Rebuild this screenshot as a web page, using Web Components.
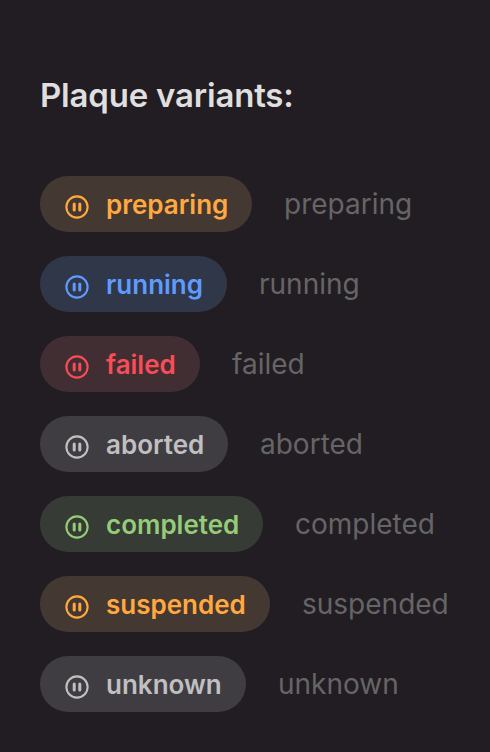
<!DOCTYPE html>
<html lang="en"><head><meta charset="utf-8"><title>Plaque variants</title>
<style>
body{margin:0;background:#221d22;font-family:Inter,"Liberation Sans",sans-serif}
</style></head><body>
<plaque-list heading="Plaque variants:">
<plaque-row variant="preparing" style="--fg:#ffa940;--bg:#443932;--w:212px"></plaque-row>
<plaque-row variant="running" style="--fg:#5e9bff;--bg:#2f3748;--w:187px"></plaque-row>
<plaque-row variant="failed" style="--fg:#f84d58;--bg:#412e33;--w:160px"></plaque-row>
<plaque-row variant="aborted" style="--fg:#c0c0c1;--bg:#3f3d42;--w:188px"></plaque-row>
<plaque-row variant="completed" style="--fg:#95cc78;--bg:#373b36;--w:223px"></plaque-row>
<plaque-row variant="suspended" style="--fg:#ffa940;--bg:#443932;--w:230px"></plaque-row>
<plaque-row variant="unknown" style="--fg:#c0c0c1;--bg:#3f3d42;--w:206px"></plaque-row>
</plaque-list>
<script>
class PlaqueList extends HTMLElement{
connectedCallback(){
this.attachShadow({mode:'open'}).innerHTML=`<style>
:host{display:block;box-sizing:border-box;height:752px;padding:75px 40px 0;overflow:hidden}
h1{margin:0 0 61px;font-size:33px;line-height:40px;font-weight:600;letter-spacing:-.2px;color:#dfdfdf;white-space:nowrap}
div{display:flex;flex-direction:column;gap:24px}
</style><h1>${this.getAttribute('heading')}</h1><div><slot></slot></div>`;
}}
class PauseIcon extends HTMLElement{
connectedCallback(){
this.attachShadow({mode:'open'}).innerHTML=`<style>:host{display:block;width:26px;height:26px}svg{display:block}</style>
<svg width="26" height="26" viewBox="0 0 26 26" fill="none" stroke="currentColor"><circle cx="13" cy="13" r="10.6" stroke-width="2.1"/><path d="M10.2 10.1v5.8M15.8 10.1v5.8" stroke-width="3" stroke-linecap="round"/></svg>`;
}}
class PlaqueRow extends HTMLElement{
connectedCallback(){
const v=this.getAttribute('variant');
this.attachShadow({mode:'open'}).innerHTML=`<style>
:host{display:flex;gap:32px;height:56px;align-items:center;white-space:nowrap}
.plaque{box-sizing:border-box;display:flex;align-items:center;width:var(--w);height:56px;border-radius:28px;padding-left:24px;gap:16px;background:var(--bg);color:var(--fg);font-size:26px;line-height:36px;font-weight:600}
.plaque span{padding-top:2px}
pause-icon{margin-top:6px}
.label{font-size:28px;line-height:36px;color:#666566}
</style><div class="plaque"><pause-icon></pause-icon><span>${v}</span></div><span class="label">${v}</span>`;
}}
customElements.define('pause-icon',PauseIcon);
customElements.define('plaque-row',PlaqueRow);
customElements.define('plaque-list',PlaqueList);
</script></body></html>
